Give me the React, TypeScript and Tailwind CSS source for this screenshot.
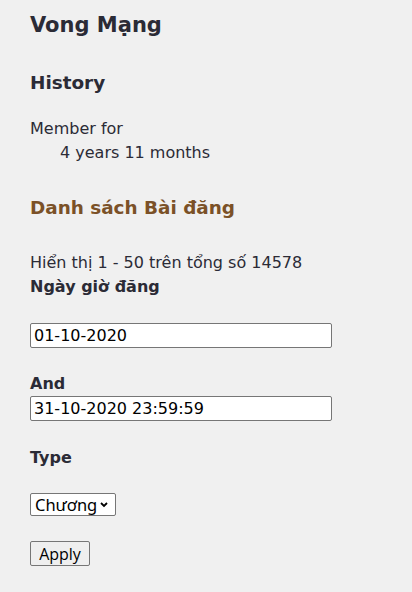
export default function App() {
  return (
    <div className="min-h-[592px] bg-[#f0f0f0] px-[30px] pt-[13px] text-[16px] leading-6 text-[#2b2b36] font-['DejaVu_Sans',Verdana,sans-serif]">
      <h1 className="text-[21px] leading-[25px] font-bold">Vong Mạng</h1>

      <h2 className="mt-[34px] text-[18.4px] leading-[22px] font-bold">History</h2>
      <div className="mt-[23px]">
        <div>Member for</div>
        <div className="pl-[30px]">4 years 11 months</div>
      </div>

      <h2 className="mt-[32px] text-[18.4px] leading-[22px] font-bold text-[#7b5127]">Danh sách Bài đăng</h2>
      <div className="mt-[32px]">Hiển thị 1 - 50 trên tổng số 14578</div>

      <form onSubmit={e => e.preventDefault()}>
        <div className="font-bold">Ngày giờ đăng</div>
        <input
          type="text"
          defaultValue="01-10-2020"
          className="mt-[24px] block h-[25px] w-[302px] rounded-[2px] border border-[#767676] bg-white px-[3px] text-[16px] text-black font-['DejaVu_Sans',Verdana,sans-serif]"
        />

        <div className="mt-[24px] font-bold">And</div>
        <input
          type="text"
          defaultValue="31-10-2020 23:59:59"
          className="block h-[25px] w-[302px] rounded-[2px] border border-[#767676] bg-white px-[3px] text-[16px] text-black font-['DejaVu_Sans',Verdana,sans-serif]"
        />

        <div className="mt-[25px] font-bold">Type</div>
        <div className="mt-[23px] flex">
          <label className="relative flex h-[23px] w-[86px] items-center rounded-[2px] border border-[#767676] bg-white pl-[4px] text-[16.5px] text-black font-['Noto_Sans','Open_Sans',sans-serif]">
            <span>Chương</span>
            <svg className="absolute right-[7px] top-[8px]" width="8" height="6" viewBox="0 0 8 6" fill="none">
              <path d="M1 1l3 3l3-3" stroke="#000" strokeWidth="1.8" />
            </svg>
          </label>
        </div>

        <button
          type="submit"
          className="mt-[25px] flex h-[25px] w-[60px] items-center justify-center rounded-[2px] border border-[#767676] bg-[#efefef] text-[16px] text-black font-['Open_Sans','Noto_Sans',sans-serif]"
        >
          Apply
        </button>
      </form>
    </div>
  );
}
